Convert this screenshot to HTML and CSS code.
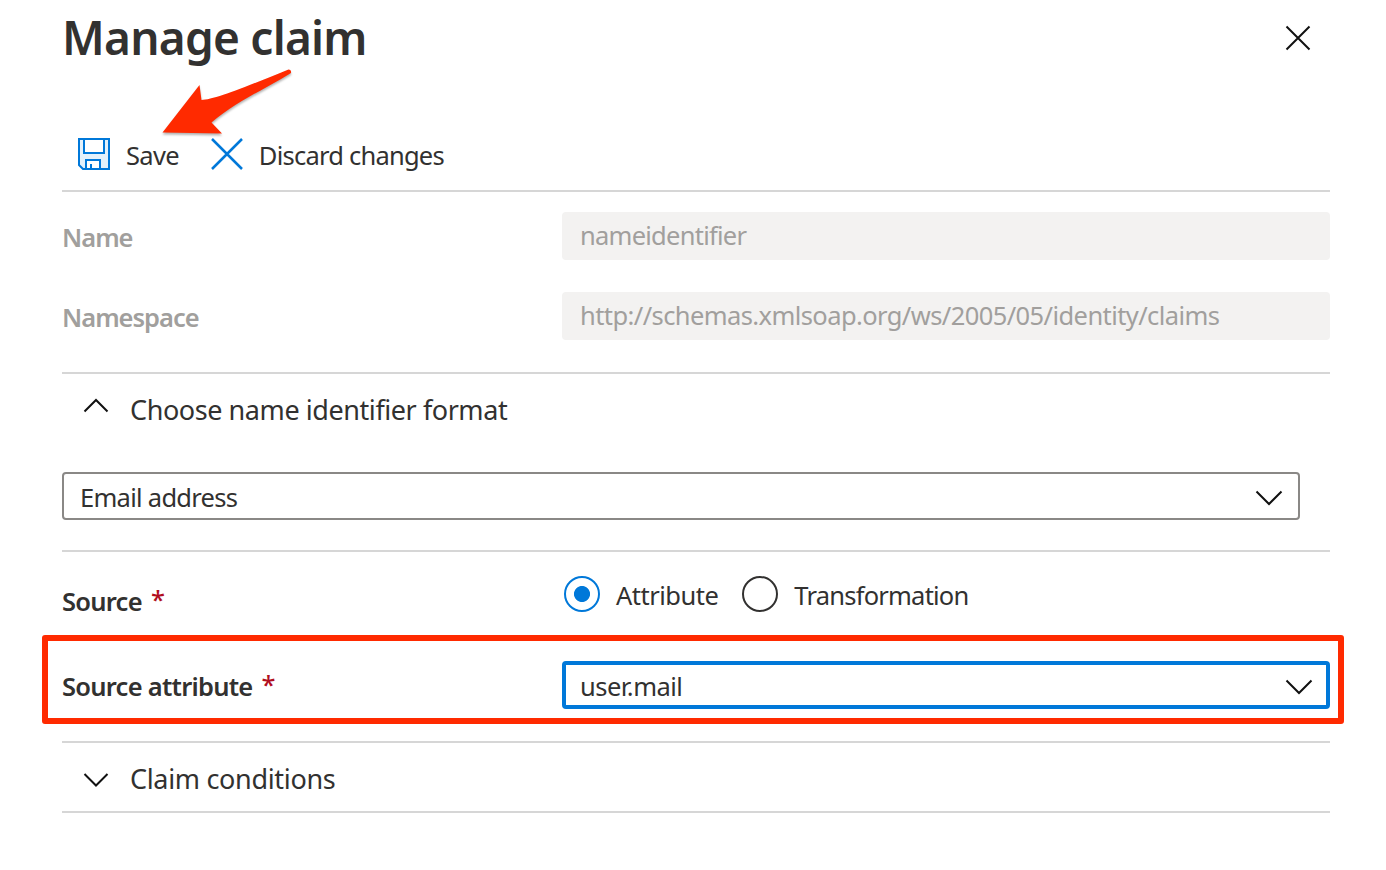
FILE: index.html
```html
<!DOCTYPE html>
<html lang="en">
<head>
<meta charset="utf-8">
<title>Manage claim</title>
<link rel="stylesheet" href="styles.css">
</head>
<body>
<main class="panel">
  <header class="header">
    <h1 class="title">Manage claim</h1>
    <svg class="close" width="26" height="26" viewBox="0 0 26 26"><path d="M1.500 1.500l23 23M24.500 1.500l-23 23"/></svg>
  </header>

  <div class="toolbar">
    <div class="command">
      <svg class="command-icon" width="32" height="32" viewBox="0 0 32 32">
        <path class="tint" d="M1 1h30v30H5l-4-4z"/>
        <path class="paper" d="M6 1h20v14H6zM8 31v-9h14v9z"/>
        <path class="line" d="M1 1h30v30H5l-4-4zM6 1v14h20V1M8 31v-9h14v9M13 31v-5"/>
      </svg>
      <span class="t-save">Save</span>
    </div>
    <div class="command">
      <svg class="command-icon" width="32" height="32" viewBox="0 0 32 32"><path class="line cross" d="M1 1l30 30M31 1L1 31"/></svg>
      <span class="t-discard">Discard changes</span>
    </div>
    <svg class="arrow" width="140" height="76" viewBox="160 64 140 76"><path d="M288.500 69.500Q291.500 69.500 291 73C264 90 238 100 211.500 122.500L222 133.500L162.500 132.500L199.500 85L201.500 100C213 100 246 87 288.500 69.500z"/></svg>
  </div>

  <div class="row row-name">
    <span class="label muted t-name">Name</span>
    <div class="readonly"><span class="t-nameid">nameidentifier</span></div>
  </div>
  <div class="row row-namespace">
    <span class="label muted t-name">Namespace</span>
    <div class="readonly"><span class="t-url">http://schemas.xmlsoap.org/ws/2005/05/identity/claims</span></div>
  </div>

  <section class="format">
    <div class="section-head format-head">
      <svg width="26" height="16" viewBox="0 0 26 16"><path d="M1.500 13.500L13 2l11.500 11.500"/></svg>
      <span class="t-choose">Choose name identifier format</span>
    </div>
    <div class="select">
      <span class="t-email">Email address</span>
      <svg width="28" height="16" viewBox="0 0 28 16"><path d="M1.500 1.500L14 14L26.500 1.500"/></svg>
    </div>
  </section>

  <div class="row row-source">
    <div class="label"><span class="t-source">Source</span><span class="star">*</span></div>
    <div class="radios">
      <div class="radio checked"><i class="dot"></i><span class="t-attr">Attribute</span></div>
      <div class="radio"><i class="dot"></i><span class="t-trans">Transformation</span></div>
    </div>
  </div>

  <div class="row row-attribute">
    <div class="label"><span class="t-source">Source attribute</span><span class="star">*</span></div>
    <div class="select focused">
      <span class="t-mail">user.mail</span>
      <svg width="28" height="16" viewBox="0 0 28 16"><path d="M1.500 1.500L14 14L26.500 1.500"/></svg>
    </div>
  </div>

  <div class="section-head conditions">
    <svg width="26" height="16" viewBox="0 0 26 16"><path d="M1.500 2L13 13.500L24.500 2"/></svg>
    <span class="t-cond">Claim conditions</span>
  </div>
</main>
</body>
</html>
```
FILE: styles.css
```css
* { box-sizing: border-box; }
body {
  margin: 0;
  background: #fff;
  color: #323130;
  font: 25.5px/36px "Noto Sans", "Open Sans", sans-serif;
}
span { white-space: nowrap; }
svg { display: block; flex: none; fill: none; stroke: #111; stroke-width: 2; }
.panel { height: 870px; padding: 0 56px 0 62px; overflow: hidden; }

.header { display: flex; justify-content: space-between; height: 118px; padding-right: 19px; }
.title { margin: 4px 0 0; font-size: 46px; line-height: 66px; font-weight: 600; letter-spacing: -.75px; white-space: nowrap; }
.close { margin-top: 25px; }

.toolbar { position: relative; display: flex; gap: 32px; height: 74px; padding: 20px 0 0 16px; border-bottom: 2px solid #d6d6d6; }
.command { display: flex; gap: 16px; height: 36px; line-height: 34px; }
.command-icon .line { stroke: #0078d9; }
.command-icon .cross { stroke-width: 2.5; }
.command-icon .tint { fill: #e3f1fb; stroke: none; }
.command-icon .paper { fill: #fff; stroke: none; }
.arrow { position: absolute; left: 98px; top: -54px; fill: #ff2a00; stroke: none; filter: drop-shadow(0 2px 1px rgba(0, 0, 0, .3)); }

.row { display: flex; height: 48px; }
.label { width: 500px; flex: none; font-weight: 600; }
.muted { color: #a19f9d; }
.row-name { margin-top: 20px; }
.row-namespace { margin-top: 32px; }
.row-name .label, .row-namespace .label { padding-top: 7px; }
.readonly { flex: 1; padding: 5px 18px; background: #f3f2f1; border-radius: 4px; color: #a19f9d; }

.format { height: 180px; margin-top: 32px; border-top: 2px solid #d6d6d6; border-bottom: 2px solid #d6d6d6; }
.section-head { display: flex; gap: 21px; padding-left: 21px; font-size: 27px; }
.format-head { height: 98px; padding-top: 18px; }
.format-head svg { margin-top: 6px; }
.select { display: flex; justify-content: space-between; width: 1238px; height: 48px; padding: 5px 15px 0 16px; border: 2px solid #8a8886; border-radius: 4px; }
.select svg { margin-top: 11px; }

.row-source { height: 83px; padding-top: 24px; }
.row-source .label { padding-top: 7px; }
.star { position: relative; top: -2px; margin-left: 9px; color: #b10e1e; font-weight: 500; }
.radios { display: flex; gap: 24px; padding-left: 2px; }
.radio { display: flex; gap: 16px; }
.radio span { padding-top: 1px; }
.dot { width: 36px; height: 36px; border: 2px solid #323130; border-radius: 50%; }
.checked .dot { border-color: #0078d9; background: radial-gradient(circle, #0078d9 7.600px, #fff 8.400px); }

.row-attribute { height: 89px; margin: 0 -14px 17px -20px; padding: 20px 8px 0 14px; border: 6px solid #ff2a00; border-radius: 3px; }
.row-attribute .label { padding-top: 7px; }
.focused { flex: 1; width: auto; padding: 3px 13px 0 14px; border: 4px solid #0078d9; }
.focused svg { margin-top: 11px; }

.conditions { height: 72px; padding-top: 18px; border-top: 2px solid #d6d6d6; border-bottom: 2px solid #d6d6d6; }
.conditions svg { margin-top: 11px; }

.t-save { letter-spacing: -.7px; }
.t-discard { letter-spacing: -.77px; }
.t-name { letter-spacing: -1px; }
.t-nameid { letter-spacing: -.75px; }
.t-url { letter-spacing: -.59px; }
.t-choose { letter-spacing: -.43px; }
.t-email { letter-spacing: -.72px; }
.t-source { letter-spacing: -.74px; }
.t-attr { letter-spacing: -.5px; }
.t-trans { letter-spacing: -.78px; }
.t-mail { letter-spacing: -.5px; }
.t-cond { letter-spacing: -.33px; }
```
